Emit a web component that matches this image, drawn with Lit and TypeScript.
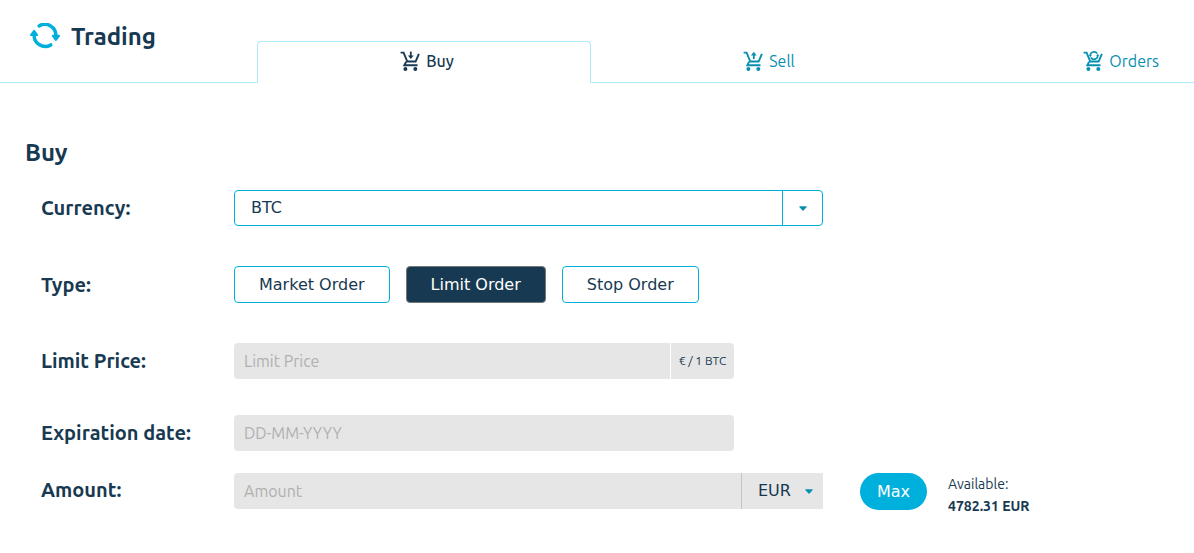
import { LitElement, html, svg, css } from "lit";
import { customElement, property, state } from "lit/decorators.js";
import { classMap } from "lit/directives/class-map.js";

const caret = html`<svg class="caret" viewBox="0 0 8 5" aria-hidden="true">
  <path d="M0.6 0.3h6.8q.6.5.1 1L4.5 4.4q-.5.5-1 0L.5 1.3q-.5-.5.1-1z" fill="currentColor" />
</svg>`;

const cartMarks: Record<string, unknown> = {
  buy: svg`<path d="M10.8 .6v4.5" stroke-width="1.8" /><path d="M7.9 4.4h5.8l-2.9 3.7z" fill="currentColor" stroke="none" />`,
  sell: svg`<path d="M10.8 8V4" stroke-width="1.8" /><path d="M7.9 4.5h5.8L10.8.8z" fill="currentColor" stroke="none" />`,
  orders: svg`<path d="M7.2 4.2a3.8 3.8 0 0 1 7-1.5M14.8 4.7a3.8 3.8 0 0 1-7 1.8" stroke-width="1.6" />
    <path d="M5.8 4h3L7.3 6.2zM16.2 4.9h-3l1.5-2.2z" fill="currentColor" stroke="none" />`,
};

@customElement("cart-icon")
export class CartIcon extends LitElement {
  @property() kind = "buy";

  static styles = css`
    :host {
      display: block;
      width: 20px;
      height: 20px;
    }
    svg {
      display: block;
      width: 20px;
      height: 20px;
    }
  `;

  render() {
    return html`<svg viewBox="0 0 20 20" fill="none" stroke="currentColor" stroke-width="1.9" aria-hidden="true">
      <path d="M.6 1.6h3l3.7 8.9h8.3l3.3-7.7M6.2 10.6l-1.9 3.7h13.2" />
      <circle cx="5.4" cy="18" r="2" fill="currentColor" stroke="none" />
      <circle cx="15.3" cy="18" r="2" fill="currentColor" stroke="none" />
      ${cartMarks[this.kind]}
    </svg>`;
  }
}

@customElement("app-root")
export class AppRoot extends LitElement {
  @state() private tab = "buy";
  @state() private orderType = "Limit Order";

  static styles = css`
    :host {
      display: block;
      color: #173951;
      background: #fff;
      font-family: Ubuntu, "Noto Sans", sans-serif;
      font-size: 16px;
      line-height: 20px;
    }
    * {
      box-sizing: border-box;
    }
    header {
      display: grid;
      grid-template-columns: 257px minmax(0, 1fr);
    }
    .brand {
      display: flex;
      align-items: center;
      gap: 11px;
      height: 83px;
      padding: 0 0 8px 30px;
      border-bottom: 1px solid #aeebfa;
    }
    .brand svg {
      width: 30px;
      height: 28px;
    }
    h1,
    h2 {
      margin: 0;
      font-size: 24px;
      line-height: 28px;
      font-weight: 700;
    }
    nav {
      display: grid;
      grid-template-columns: 334fr 350fr 253fr;
      padding-top: 41px;
    }
    .tab {
      display: flex;
      align-items: center;
      justify-content: center;
      gap: 6px;
      height: 42px;
      padding: 0 0 2px 6px;
      border-bottom: 1px solid #aeebfa;
      color: #078fb0;
      text-decoration: none;
    }
    .tab:last-child {
      justify-content: flex-end;
      padding-right: 35px;
    }
    .tab.active {
      border: 1px solid #aeebfa;
      border-bottom-color: transparent;
      border-radius: 4px 4px 0 0;
      color: #173951;
      font-weight: 500;
    }
    form {
      padding: 56px 24px 40px 25px;
    }
    .row {
      display: grid;
      grid-template-columns: 193px minmax(0, 1fr);
      align-items: center;
      padding-left: 16px;
      margin-top: 36px;
    }
    h2 + .row {
      margin-top: 23px;
    }
    .row.type {
      margin: 40px 0;
    }
    .row.amount {
      margin-top: 22px;
      align-items: start;
    }
    .label {
      font-size: 20px;
      line-height: 34px;
      font-weight: 700;
    }
    input,
    select,
    button {
      margin: 0;
      border: 0;
      background: none;
      color: inherit;
      font-family: "DejaVu Sans", sans-serif;
      font-size: 16px;
      line-height: 20px;
    }
    .pick {
      display: grid;
      align-items: center;
      height: 36px;
    }
    .pick select {
      grid-area: 1 / 1;
      width: 100%;
      height: 100%;
      padding: 0 16px;
      appearance: none;
    }
    .pick .arrow {
      grid-area: 1 / 1;
      justify-self: end;
      display: grid;
      place-items: center;
      height: 100%;
      color: #078fb0;
      pointer-events: none;
    }
    .caret {
      width: 8px;
      height: 5px;
    }
    .pick.currency {
      max-width: 589px;
      border: 1px solid #00b0dc;
      border-radius: 4px;
    }
    .currency .arrow {
      width: 40px;
      border-left: 1px solid #00b0dc;
    }
    .types {
      display: flex;
      flex-wrap: wrap;
      gap: 16px;
    }
    .choice {
      height: 37px;
      padding: 0 24px;
      border: 1px solid #00b0dc;
      border-radius: 4px;
    }
    .choice.on {
      background: #173951;
      border-color: #767676;
      color: #fff;
    }
    .field {
      display: flex;
      max-width: 500px;
      height: 36px;
      border-radius: 4px;
      background: #e6e6e6;
      overflow: hidden;
    }
    .field input {
      flex: 1;
      min-width: 0;
      padding: 0 10px;
      font-family: inherit;
    }
    .field input::placeholder {
      color: #b0b0b0;
      opacity: 1;
    }
    .unit {
      width: 64px;
      border-left: 1px solid #fff;
      font-size: 12px;
      line-height: 36px;
      text-align: center;
    }
    .amounts {
      display: flex;
      align-items: flex-start;
    }
    .amounts .field {
      flex: 1;
      max-width: 589px;
      border-radius: 4px 0 0 4px;
    }
    .field .pick {
      width: 82px;
      border-left: 1px solid #c4c4c4;
    }
    .field .arrow {
      padding-right: 10px;
    }
    .max {
      height: 37px;
      margin-left: 37px;
      padding: 0 17px;
      border-radius: 19px;
      background: #00b0dc;
      color: #fff;
    }
    .available {
      margin-left: 21px;
      font-size: 14px;
      line-height: 22px;
      white-space: nowrap;
    }
    .available strong {
      display: block;
      font-weight: 700;
    }
  `;

  private renderTab(id: string, label: string) {
    return html`<a
      class=${classMap({ tab: true, active: this.tab === id })}
      href="#${id}"
      @click=${() => (this.tab = id)}
      ><cart-icon kind=${id}></cart-icon>${label}</a
    >`;
  }

  private renderType(label: string) {
    const on = this.orderType === label;
    return html`<button
      type="button"
      class=${classMap({ choice: true, on })}
      aria-pressed=${on}
      @click=${() => (this.orderType = label)}
    >${label}</button>`;
  }

  render() {
    return html`
      <header>
        <div class="brand">
          <svg viewBox="0 0 30 28" fill="none" stroke="#00b0dc" stroke-width="3.5" stroke-linecap="round" aria-hidden="true">
            <path d="M9.2 2.9A11 11 0 0 1 25.8 13" />
            <path d="M20.8 21.9A11 11 0 0 1 4.2 11.8" />
            <path d="M22.8 12.8h6.2L25.9 17z" fill="#00b0dc" stroke-width="2" stroke-linejoin="round" />
            <path d="M1 12h6.2L4.1 7.8z" fill="#00b0dc" stroke-width="2" stroke-linejoin="round" />
          </svg>
          <h1>Trading</h1>
        </div>
        <nav>
          ${this.renderTab("buy", "Buy")} ${this.renderTab("sell", "Sell")} ${this.renderTab("orders", "Orders")}
        </nav>
      </header>
      <form>
        <h2>Buy</h2>
        <div class="row">
          <label class="label" for="currency">Currency:</label>
          <div class="pick currency">
            <select id="currency"><option>BTC</option></select>
            <span class="arrow">${caret}</span>
          </div>
        </div>
        <div class="row type">
          <span class="label" id="type">Type:</span>
          <div class="types" role="group" aria-labelledby="type">
            ${["Market Order", "Limit Order", "Stop Order"].map((t) => this.renderType(t))}
          </div>
        </div>
        <div class="row">
          <label class="label" for="price">Limit Price:</label>
          <div class="field">
            <input id="price" placeholder="Limit Price" />
            <span class="unit">€ / 1 BTC</span>
          </div>
        </div>
        <div class="row">
          <label class="label" for="expires">Expiration date:</label>
          <div class="field"><input id="expires" placeholder="DD-MM-YYYY" /></div>
        </div>
        <div class="row amount">
          <label class="label" for="amount">Amount:</label>
          <div class="amounts">
            <div class="field">
              <input id="amount" placeholder="Amount" />
              <div class="pick">
                <select aria-label="Amount currency"><option>EUR</option></select>
                <span class="arrow">${caret}</span>
              </div>
            </div>
            <button type="button" class="max">Max</button>
            <div class="available">Available: <strong>4782.31 EUR</strong></div>
          </div>
        </div>
      </form>
    `;
  }
}
